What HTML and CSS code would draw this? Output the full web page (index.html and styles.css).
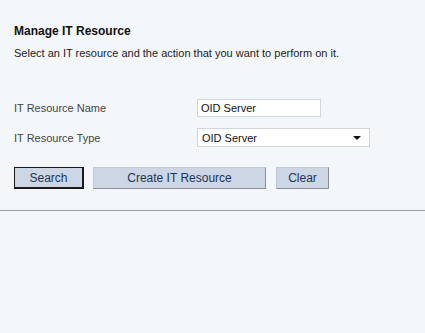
FILE: index.html
```html
<!DOCTYPE html>
<html>
<head>
<meta charset="utf-8">
<link rel="stylesheet" href="styles.css">
</head>
<body>
<div class="panel">
  <h1 class="title">Manage IT Resource</h1>
  <p class="desc">Select an IT resource and the action that you want to perform on it.</p>
  <div class="form">
    <div class="row">
      <label class="label">IT Resource Name</label>
      <div class="input">OID Server</div>
    </div>
    <div class="row">
      <label class="label">IT Resource Type</label>
      <div class="select"><span>OID Server</span><span class="arrow"></span></div>
    </div>
  </div>
  <div class="buttons">
    <button class="btn btn-search">Search</button>
    <button class="btn btn-create">Create IT Resource</button>
    <button class="btn btn-clear">Clear</button>
  </div>
</div>
<div class="rule"></div>
</body>
</html>
```
FILE: styles.css
```css
html, body {
  margin: 0;
  padding: 0;
  background: #f4f7fa;
  font-family: "Liberation Sans", Arial, sans-serif;
  font-size: 11px;
  color: #222;
}
.panel {
  padding: 24px 14px 0 14px;
}
.title {
  margin: 0;
  font-size: 12px;
  font-weight: bold;
  color: #111;
  line-height: 14px;
}
.desc {
  margin: 8px 0 0 0;
  line-height: 14px;
  color: #222;
}
.form {
  margin-top: 39px;
  display: flex;
  flex-direction: column;
  gap: 11px;
}
.row {
  display: flex;
  align-items: center;
}
.label {
  width: 183px;
  color: #444;
}
.input {
  width: 124px;
  height: 18px;
  box-sizing: border-box;
  border: 1px solid #d3d7dc;
  background: #fff;
  padding: 0 3px;
  line-height: 16px;
  color: #111;
}
.select {
  width: 173px;
  height: 19px;
  box-sizing: border-box;
  border: 1px solid #d3d7dc;
  background: #fff;
  padding: 0 3px 0 4px;
  display: flex;
  align-items: center;
  justify-content: space-between;
  color: #111;
}
.arrow {
  width: 0;
  height: 0;
  border-left: 4px solid transparent;
  border-right: 4px solid transparent;
  border-top: 4px solid #111;
  margin-right: 5px;
}
.buttons {
  margin-top: 20px;
  display: flex;
  gap: 9px;
}
.btn {
  height: 22px;
  box-sizing: border-box;
  font-family: "Liberation Sans", Arial, sans-serif;
  font-size: 12px;
  color: #1c3555;
  background: #cdd6e4;
  border: 1px solid #c3cad6;
  border-right-color: #8a8f96;
  border-bottom-color: #8a8f96;
  padding: 0;
  margin: 0;
}
.btn-search {
  width: 70px;
  border: 1px solid #1a1a1a;
  border-width: 1px 2px 2px 1px;
}
.btn-create {
  width: 173px;
}
.btn-clear {
  width: 53px;
  margin-left: 1px;
}
.rule {
  margin-top: 21px;
  height: 1px;
  background: #9a9da2;
}
```
